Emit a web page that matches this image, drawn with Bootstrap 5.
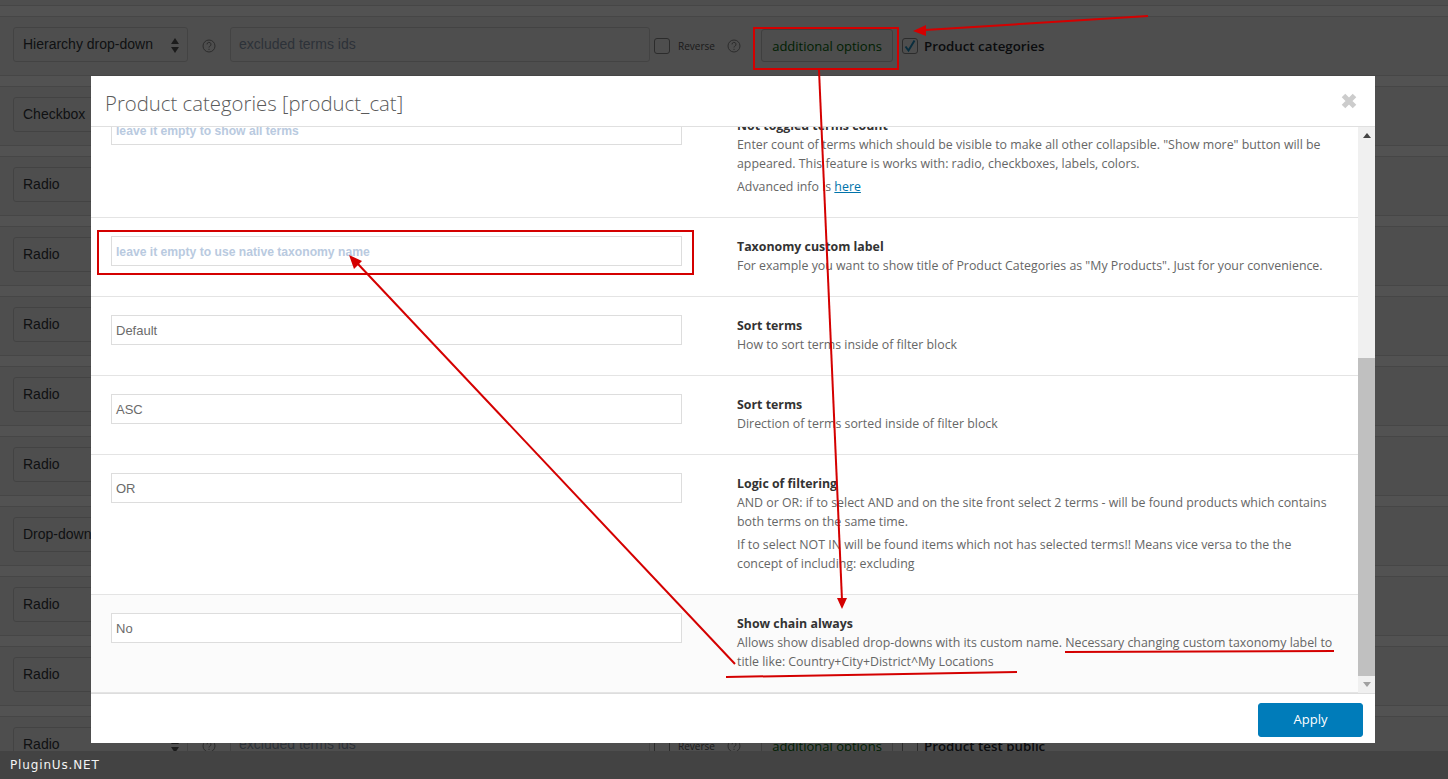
<!DOCTYPE html>
<html lang="en">
<head>
<meta charset="utf-8">
<title>Product categories</title>
<link href="https://cdn.jsdelivr.net/npm/bootstrap@5.3.0/dist/css/bootstrap.min.css" rel="stylesheet">
<style>
    html, body { height: 100%; overflow: hidden; }
    body { background: #f1f1f1; font-family: "Liberation Sans", Arial, sans-serif; font-size: 13px; color: #444; }

    /* page behind the popup */
    .tax-list { padding-top: 5px; }
    .top-strip { height: 11px; background: #fff; border-top: 1px solid #d8d8d8; }
    .tax-row { height: 60px; background: #f1f1f1; border-top: 1px solid #d8d8d8; border-bottom: 1px solid #d8d8d8; padding-left: 13px; }
    .row-gap { height: 10px; background: #fff; }
    .tax-type { width: 175px; height: 35px; margin-top: 10px; padding: 0 9px; font-size: 14px; line-height: 33px; color: #32373c; background: #f3f3f3; border: 1px solid #d0d0d0; border-radius: 3px; position: relative; }
    .tax-type::before, .tax-type::after { content: ""; position: absolute; right: 8px; border-left: 4px solid transparent; border-right: 4px solid transparent; }
    .tax-type::before { top: 10px; border-bottom: 6px solid #555; }
    .tax-type::after { top: 19px; border-top: 6px solid #555; }
    .help-mark { width: 14px; height: 14px; flex: none; margin: 22px 0 0 14px; }
    .help-mark.after-reverse { margin-left: 12px; }
    .tax-exclude { width: 420px; height: 35px; margin: 10px 0 0 14px; padding: 0 8px; font-size: 14px; line-height: 33px; color: #8c9bb0; background: #f3f3f3; border: 1px solid #d0d0d0; border-radius: 3px; }
    .tick-box { width: 16px; height: 16px; flex: none; border: 1px solid #888; border-radius: 3px; background: #f3f3f3; margin-top: 21px; display: flex; align-items: center; justify-content: center; }
    .rev-label { font-family: "Open Sans", sans-serif; font-size: 10px; line-height: 14px; color: #555; margin: 22px 0 0 8px; width: 37px; }
    .opt-btn { width: 132px; height: 33px; margin-top: 12px; margin-left: 20px; font-size: 13px; line-height: 33px; text-align: center; color: #006505; background: #eee; border: 1px solid #c4c4c4; border-radius: 3px; font-family: "Open Sans", sans-serif; }
    .tick-box.name-tick { margin-left: 9px; }
    .tax-name { font-family: "Open Sans", sans-serif; font-weight: 600; font-size: 13.3px; line-height: 18px; color: #23282d; margin: 20px 0 0 6px; }

    .dim-layer { position: fixed; inset: 0; background: rgba(0, 0, 0, .68); z-index: 10; }

    /* popup */
    .opt-popup { position: fixed; left: 91px; top: 76px; width: 1284px; height: 667px; z-index: 20; background: #fff; border: 0; border-radius: 0; font-family: "Open Sans", sans-serif; }
    .opt-popup .modal-header { height: 51px; padding: 5px 18px 0 14px; border-bottom: 1px solid #e0e0e0; border-radius: 0; }
    .opt-popup .modal-title { font-weight: 300; font-size: 20.35px; color: #5a5a5a; }
    .close-mark { width: 16px; height: 16px; margin-top: -5px; }
    .opt-body { height: 566px; overflow: hidden; }
    .opt-rows { flex: 1; min-width: 0; overflow: hidden; }
    .opt-item { border-bottom: 1px solid #e4e4e4; padding: 18px 0 0 20px; }
    .opt-item.first-item { margin-top: -30px; height: 121px; }
    .opt-item.tall-item { height: 140px; }
    .opt-item.mid-item { height: 79px; }
    .opt-item.last-item { height: 98px; background: #fbfbfb; }
    .opt-field { width: 571px; height: 30px; flex: none; padding: 0 4px; font-family: "Liberation Sans", sans-serif; font-size: 13px; line-height: 29px; background: #fff; border: 1px solid #ddd; color: #6b6b6b; }
    .opt-field.empty-field { color: #b9cae0; font-weight: 700; font-size: 12.15px; line-height: 30px; }
    .opt-text { margin-left: 55px; width: 600px; padding-top: 1px; font-size: 12.36px; line-height: 19px; color: #666; }
    .opt-text strong { display: block; color: #333; font-weight: 700; }
    .opt-text p { margin: 0 0 4px; }
    .opt-text a { color: #0073aa; }
    .fake-scroll { width: 17px; flex: none; background: #f0f0f0; }
    .scroll-up, .scroll-down { height: 17px; flex: none; display: flex; align-items: center; justify-content: center; }
    .scroll-up::before { content: ""; border-left: 4px solid transparent; border-right: 4px solid transparent; border-bottom: 5px solid #444; }
    .scroll-down::before { content: ""; border-left: 4px solid transparent; border-right: 4px solid transparent; border-top: 5px solid #a0a0a0; }
    .scroll-track { flex: 1; padding-top: 214px; }
    .scroll-thumb { height: 318px; background: #c0c0c0; }
    .opt-popup .modal-footer { height: 50px; padding: 3px 12px 0 0; background: #fff; border-top: 1px solid #ddd; border-radius: 0; }
    .apply-btn { width: 105px; height: 34px; margin: 0; padding: 0; background: #007cba; border-color: #007cba; border-radius: 3px; font-size: 13px; font-weight: 500; color: #fff; }

    .credit-bar { position: fixed; left: 0; right: 0; bottom: 0; height: 28px; z-index: 30; background: #434343; color: #f4f4f4; font-family: "DejaVu Sans", sans-serif; font-size: 12px; line-height: 28px; padding-left: 10px; letter-spacing: .85px; }

    /* red marks drawn on the screenshot */
    .red-marks { position: fixed; left: 0; top: 0; z-index: 40; pointer-events: none; }
</style>
</head>
<body>

<div id="tax-list" class="tax-list"></div>

<div class="dim-layer"></div>

<div class="modal-content opt-popup">
    <div class="modal-header">
        <h5 class="modal-title">Product categories [product_cat]</h5>
        <svg class="close-mark ms-auto" viewBox="0 0 16 16" stroke="#ccc" stroke-width="5"><path d="M2.5 2.5 L13.5 13.5 M13.5 2.5 L2.5 13.5"/></svg>
    </div>
    <div class="opt-body d-flex">
        <div class="opt-rows">
            <div class="opt-item first-item d-flex">
                <div class="opt-field empty-field">leave it empty to show all terms</div>
                <div class="opt-text">
                    <strong>Not toggled terms count</strong>
                    <p>Enter count of terms which should be visible to make all other collapsible. "Show more" button will be appeared. This feature is works with: radio, checkboxes, labels, colors.</p>
                    <p>Advanced info is <a href="#">here</a></p>
                </div>
            </div>
            <div class="opt-item mid-item d-flex">
                <div class="opt-field empty-field">leave it empty to use native taxonomy name</div>
                <div class="opt-text">
                    <strong>Taxonomy custom label</strong>
                    <p>For example you want to show title of Product Categories as "My Products". Just for your convenience.</p>
                </div>
            </div>
            <div class="opt-item mid-item d-flex">
                <div class="opt-field">Default</div>
                <div class="opt-text">
                    <strong>Sort terms</strong>
                    <p>How to sort terms inside of filter block</p>
                </div>
            </div>
            <div class="opt-item mid-item d-flex">
                <div class="opt-field">ASC</div>
                <div class="opt-text">
                    <strong>Sort terms</strong>
                    <p>Direction of terms sorted inside of filter block</p>
                </div>
            </div>
            <div class="opt-item tall-item d-flex">
                <div class="opt-field">OR</div>
                <div class="opt-text">
                    <strong>Logic of filtering</strong>
                    <p>AND or OR: if to select AND and on the site front select 2 terms - will be found products which contains both terms on the same time.</p>
                    <p>If to select NOT IN will be found items which not has selected terms!! Means vice versa to the the concept of including: excluding</p>
                </div>
            </div>
            <div class="opt-item last-item d-flex">
                <div class="opt-field">No</div>
                <div class="opt-text">
                    <strong>Show chain always</strong>
                    <p>Allows show disabled drop-downs with its custom name. Necessary changing custom taxonomy label to title like: Country+City+District^My Locations</p>
                </div>
            </div>
        </div>
        <div class="fake-scroll d-flex flex-column">
            <div class="scroll-up"></div>
            <div class="scroll-track"><div class="scroll-thumb"></div></div>
            <div class="scroll-down"></div>
        </div>
    </div>
    <div class="modal-footer">
        <button type="button" class="btn btn-primary apply-btn">Apply</button>
    </div>
</div>

<div class="credit-bar">PluginUs.NET</div>

<svg class="red-marks" width="1448" height="779" fill="none" stroke="#d40000">
    <rect x="754" y="28" width="144" height="41" stroke-width="2"/>
    <rect x="98" y="231" width="595" height="43" stroke-width="2"/>
    <path d="M1148 16 L925 30" stroke-width="2"/>
    <path d="M913 31 L926 25 L926 36 Z" fill="#d40000" stroke="none"/>
    <path d="M819 70 L842 600" stroke-width="2"/>
    <path d="M842 609 L837 598 L847 598 Z" fill="#d40000" stroke="none"/>
    <path d="M735 664 L358 264" stroke-width="2"/>
    <path d="M349 255 L362 261 L354 269 Z" fill="#d40000" stroke="none"/>
    <path d="M1065 652 L1334 651" stroke-width="2"/>
    <path d="M726 677 L1017 672" stroke-width="2"/>
</svg>

<script>
    const helpSvg = (cls) => `<svg class="help-mark ${cls}" viewBox="0 0 14 14" fill="none" stroke="#888"><circle cx="7" cy="7" r="6"/><path d="M5 5.4a2 2 0 1 1 2.8 1.8c-.6.3-.8.6-.8 1.3"/><path d="M7 9.8v1.2"/></svg>`;
    const checkSvg = '<svg width="14" height="14" viewBox="0 0 14 14" fill="none" stroke="#1e8cbe" stroke-width="2"><path d="M2.5 7.5l3 4 6-10"/></svg>';

    // rows without a name sit behind the popup, only their type box shows
    const rows = [
        { type: "Hierarchy drop-down", name: "Product categories", checked: true },
        { type: "Checkbox" },
        { type: "Radio" },
        { type: "Radio" },
        { type: "Radio" },
        { type: "Radio" },
        { type: "Radio" },
        { type: "Drop-down" },
        { type: "Radio" },
        { type: "Radio" },
        { type: "Radio", name: "Product test public" },
    ];
    document.querySelector("#tax-list").innerHTML = '<div class="top-strip"></div>' + rows.map(({ type, name, checked }) => `
        <div class="tax-row d-flex">
            <div class="tax-type">${type}</div>
            ${name ? `
            ${helpSvg("")}
            <div class="tax-exclude">excluded terms ids</div>
            <div class="tick-box ms-1"></div>
            <div class="rev-label">Reverse</div>
            ${helpSvg("after-reverse")}
            <div class="opt-btn">additional options</div>
            <div class="tick-box name-tick">${checked ? checkSvg : ""}</div>
            <div class="tax-name">${name}</div>` : ""}
        </div>
        <div class="row-gap"></div>`).join("");
</script>

<script src="https://cdn.jsdelivr.net/npm/bootstrap@5.3.0/dist/js/bootstrap.bundle.min.js"></script>
</body>
</html>
